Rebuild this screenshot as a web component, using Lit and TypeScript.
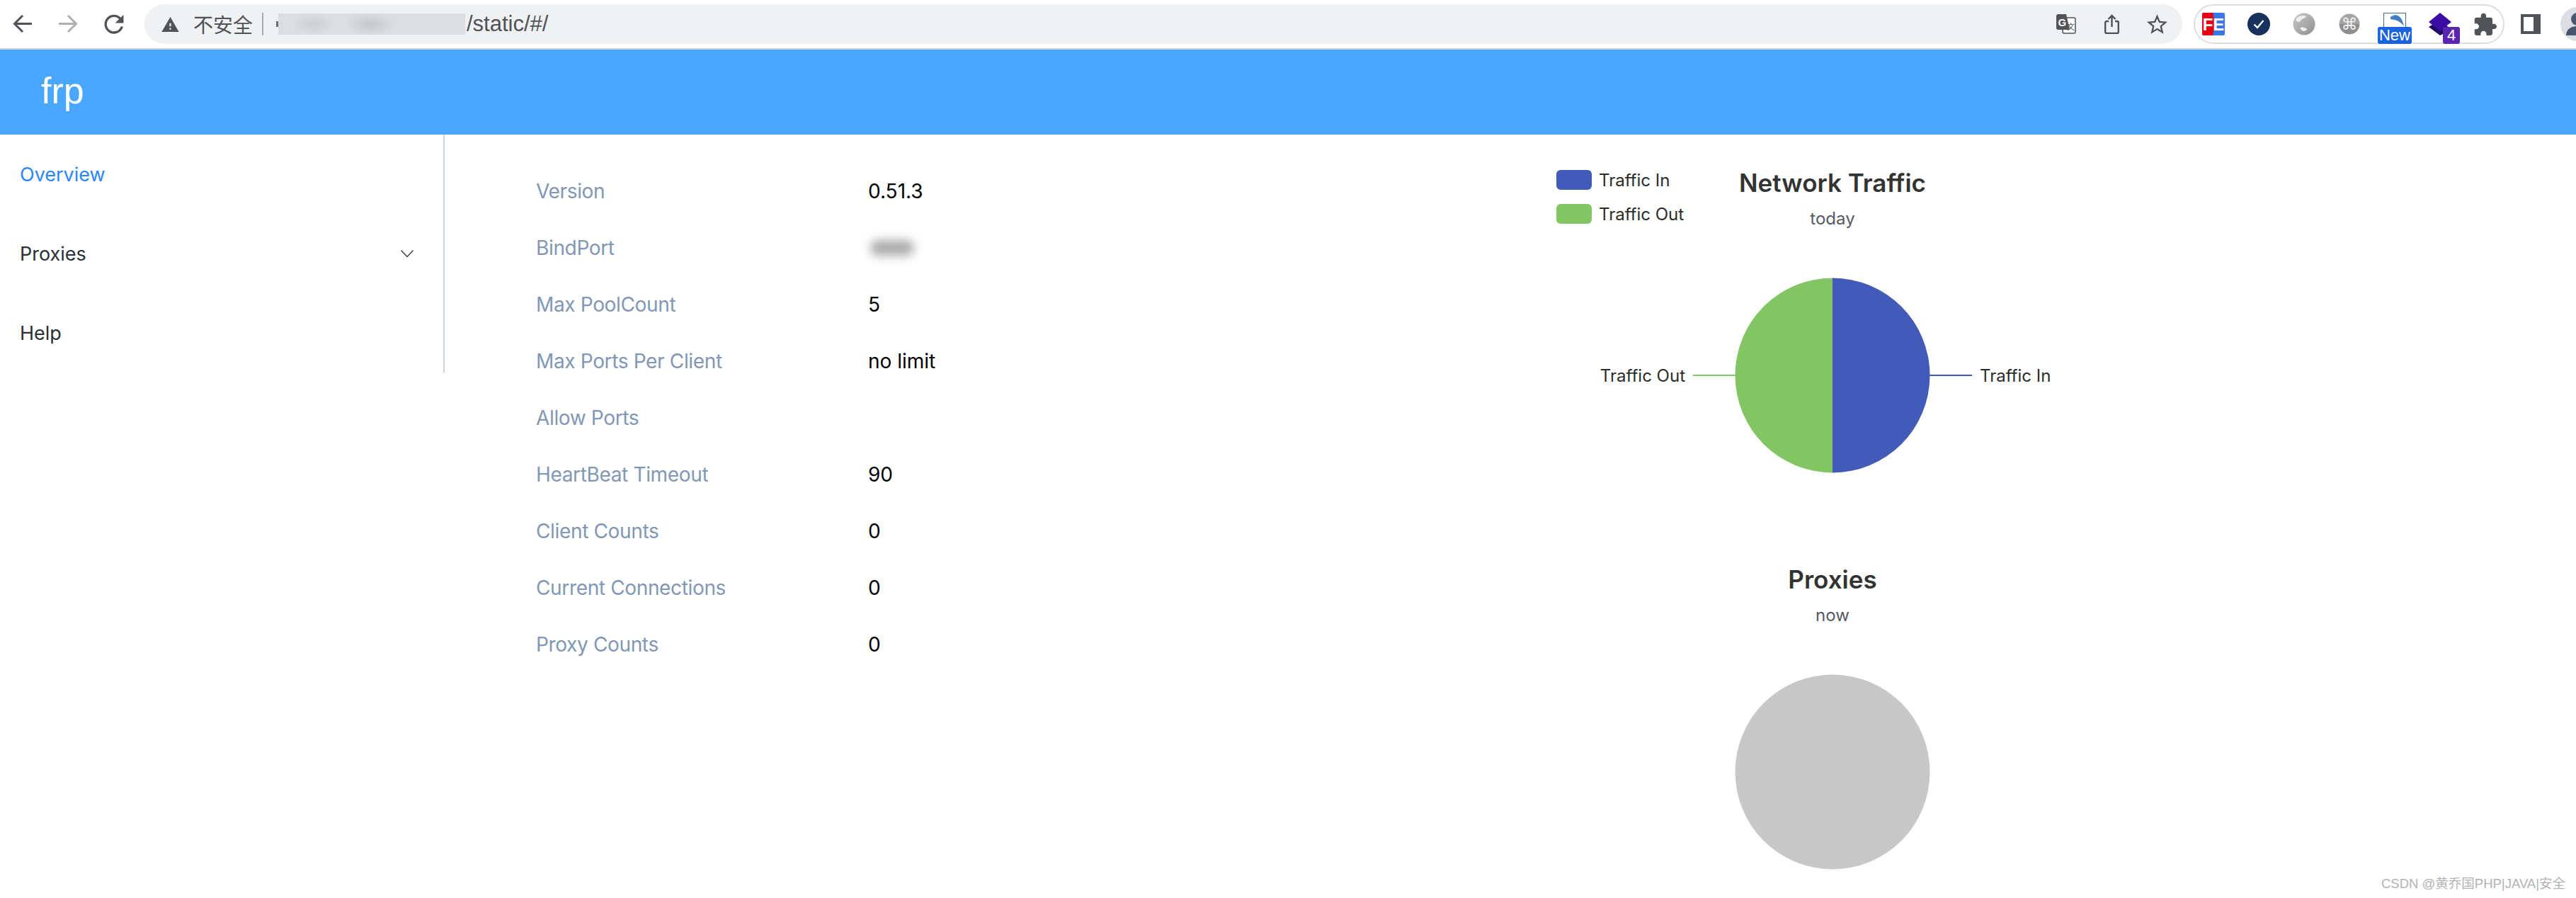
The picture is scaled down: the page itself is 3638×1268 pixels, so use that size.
import { LitElement, html, css } from "lit";
import { customElement } from "lit/decorators.js";

const rows: [string, string | null][] = [
  ["Version", "0.51.3"],
  ["BindPort", null],
  ["Max PoolCount", "5"],
  ["Max Ports Per Client", "no limit"],
  ["Allow Ports", ""],
  ["HeartBeat Timeout", "90"],
  ["Client Counts", "0"],
  ["Current Connections", "0"],
  ["Proxy Counts", "0"],
];

const reload = html`<svg class="ic" viewBox="4 3.6 16 16.6"><path fill="#505358" d="M17.65 6.35A7.958 7.958 0 0 0 12 4c-4.42 0-7.99 3.58-7.99 8s3.57 8 7.99 8c3.73 0 6.84-2.55 7.73-6h-2.08A5.99 5.99 0 0 1 12 18c-3.31 0-6-2.69-6-6s2.69-6 6-6c1.66 0 3.14.69 4.22 1.78L13 11h7V4l-2.35 2.35z"/></svg>`;

@customElement("app-root")
export class AppRoot extends LitElement {
  static styles = css`
    :host { display: block; width: 3638px; height: 1268px; overflow: hidden; position: relative; background: #fff; font-family: Inter, "Noto Sans CJK SC", sans-serif; }
    .toolbar { display: flex; align-items: center; height: 68px; padding-left: 18px; box-sizing: border-box; overflow: hidden; }
    .ic { width: 28px; height: 28px; flex: none; display: block; }
    .fwd { margin-left: 36px; }
    .rel { margin-left: 37px; }
    .url { margin-left: 29px; width: 2878px; height: 56px; border-radius: 28px; background: #eff1f3; display: flex; align-items: center; padding: 0 21px 0 24px; box-sizing: border-box; flex: none; color: #4f5257; }
    .warn { width: 25px; height: 21px; flex: none; }
    .insecure { margin-left: 20px; font-size: 28px; width: 82px; white-space: nowrap; font-family: "Noto Sans CJK SC", sans-serif; line-height: 1; }
    .sep { width: 2px; height: 32px; margin-left: 15px; background: #a9abae; }
    .speck { width: 3px; height: 8px; margin-left: 18px; background: #6b6e72; }
    .masked { width: 264px; height: 30px; background: radial-gradient(ellipse 30px 14px at 50px 15px, #cdd0d2, transparent), radial-gradient(ellipse 34px 16px at 130px 15px, #c6c9cb, transparent), #dbdde0; filter: blur(.6px); }
    .path { margin-left: 2px; font-size: 31px; font-family: "Liberation Sans", sans-serif; }
    .tools { margin-left: auto; display: flex; align-items: center; }
    .share { width: 21px; height: 28px; margin-left: 40px; }
    .star { width: 29px; height: 28px; margin-left: 39px; }
    .pill { position: relative; margin-left: 16px; width: 439px; height: 56px; box-sizing: border-box; border: 2px solid #dedede; border-radius: 28px; padding-left: 10px; display: flex; align-items: center; gap: 32px; flex: none; }
    .ext { position: relative; width: 32px; height: 32px; flex: none; }
    .ext svg { display: block; width: 32px; height: 32px; }
    .badge { position: absolute; top: 20px; height: 24px; border-radius: 3px; color: #fff; font-size: 22px; line-height: 24px; text-align: center; font-family: "Liberation Sans", sans-serif; }
    .new { left: -8px; width: 48px; background: #1a63e0; }
    .four { left: 20px; width: 24px; background: #5a24b0; }
    .panel { margin-left: 23px; }
    .avatar { margin-left: 28px; width: 48px; height: 48px; flex: none; }
    .divider { height: 2px; background: #d4d4d4; }
    .header { height: 120px; box-sizing: border-box; padding: 0 0 5px 58px; background: #4aa7ff; color: #fff; display: flex; align-items: center; font-size: 52px; font-family: "Liberation Sans", sans-serif; }
    .body { display: flex; align-items: flex-start; }
    .menu { width: 628px; height: 336px; box-sizing: border-box; border-right: 2px solid #cfd5e0; flex: none; }
    .item { height: 112px; display: flex; align-items: center; justify-content: space-between; padding: 0 41px 0 28px; font-size: 27px; color: #2b2f36; }
    .active { color: #2a86ff; }
    .chev { width: 20px; height: 12px; }
    .info { width: 1560px; box-sizing: border-box; flex: none; padding: 40px 0 0 129px; }
    .row { height: 80px; display: flex; align-items: center; font-size: 28px; }
    .key { width: 469px; color: #8197b6; flex: none; letter-spacing: -.35px; }
    .val { color: #000; }
    .blurred { display: block; width: 62px; height: 22px; margin-left: 3px; background: #ababab; border-radius: 11px; filter: blur(7px); }
    .charts { width: 800px; padding-top: 30px; display: flex; flex-direction: column; gap: 80px; flex: none; }
    .chart { display: block; width: 800px; height: 480px; font-family: Inter, sans-serif; }
    .t { font-size: 35px; font-weight: 600; fill: #333; text-anchor: middle; }
    .s { font-size: 24px; fill: #555a66; text-anchor: middle; }
    .l { font-size: 24px; fill: #2b2b2b; }
    .mark { position: absolute; right: 15px; top: 1235px; font-size: 18.5px; line-height: 26px; color: #b3b3b3; white-space: nowrap; font-family: "Liberation Sans", "Noto Sans CJK SC", sans-serif; }
  `;

  private chromeBar() {
    return html`<div class="toolbar">
      <svg class="ic" viewBox="0 0 28 28" fill="none" stroke="#505358" stroke-width="3"><path d="M27 13.5H3M14 2 2.500 13.500 14 25"/></svg>
      <svg class="ic fwd" viewBox="0 0 28 28" fill="none" stroke="#aeb0b2" stroke-width="3"><path d="M1 13.5H25M14 2 25.500 13.500 14 25"/></svg>
      <div class="rel">${reload}</div>
      <div class="url">
        <svg class="warn" viewBox="1 2 22 19"><path fill="#505358" fill-rule="evenodd" d="M1 21h22L12 2 1 21zm12-3h-2v-2h2v2zm0-4h-2v-4h2v4z"/></svg>
        <span class="insecure">不安全</span>
        <span class="sep"></span><span class="speck"></span><span class="masked"></span>
        <span class="path">/static/#/</span>
        <div class="tools">
          <svg class="ic" viewBox="0 0 28 28">
            <rect x="9" y="5" width="18" height="22" rx="2" fill="#fff" stroke="#505358" stroke-width="1.500"/>
            <path fill="#505358" d="M3 0h11l5 22H3a3 3 0 0 1-3-3V3a3 3 0 0 1 3-3z"/>
            <text x="2.500" y="17" font-size="15" font-weight="700" fill="#fff" font-family="Liberation Sans">G</text>
            <text x="15" y="22" font-size="11" fill="#505358" font-family="Noto Sans CJK SC">文</text>
          </svg>
          <svg class="share" viewBox="0 0 21 28" fill="none" stroke="#505358" stroke-width="2.400"><path d="M6 10H3.200a2 2 0 0 0-2 2v13a2 2 0 0 0 2 2h14.600a2 2 0 0 0 2-2V12a2 2 0 0 0-2-2H15M10.500 18V2M5.500 7l5-5 5 5"/></svg>
          <svg class="star" viewBox="2 2 20 19"><path fill="#505358" d="M22 9.240l-7.190-.62L12 2 9.190 8.630 2 9.240l5.460 4.730L5.820 21 12 17.270 18.180 21l-1.630-7.030L22 9.240zM12 15.400l-3.760 2.270 1-4.280-3.320-2.880 4.380-.38L12 6.100l1.710 4.040 4.380.38-3.320 2.880 1 4.280L12 15.400z"/></svg>
        </div>
      </div>
      <div class="pill">
        <div class="ext"><svg viewBox="0 0 32 32">
          <rect width="32" height="32" rx="2" fill="#3b78e7"/><path d="M2 0h13q4 16 0 32H2a2 2 0 0 1-2-2V2a2 2 0 0 1 2-2z" fill="#e60012"/>
          <text x="16" y="25" text-anchor="middle" font-size="24" font-weight="700" fill="#fff" font-family="Liberation Sans">FE</text></svg></div>
        <div class="ext"><svg viewBox="0 0 32 32"><circle cx="16" cy="16" r="16" fill="#17325c"/><path d="M9.500 16.500l4.500 4.500 8.500-10" fill="none" stroke="#fff" stroke-width="2.400"/></svg></div>
        <div class="ext"><svg viewBox="0 0 32 32"><defs><linearGradient id="gl" x1="0" y1="0" x2="1" y2="1"><stop offset="0" stop-color="#c9c9c9"/><stop offset="1" stop-color="#8f8f8f"/></linearGradient></defs>
          <circle cx="16" cy="16" r="15.500" fill="url(#gl)"/><path d="M5 8c4-4 10-5 14-3-1 3-5 3-7 5s-3 4-5 3-3-3-2-5zM11 21c3-1 7 0 9 2-1 3-5 4-7 2s-3-3-2-4z" fill="#efefef"/></svg></div>
        <div class="ext"><svg viewBox="0 0 32 32"><circle cx="16" cy="16" r="14.500" fill="#a3a3a3"/><path d="M2 16a14 14 0 0 0 28 0z" fill="#8e8e8e"/><text x="16" y="24" text-anchor="middle" font-size="23" fill="#f0f0f0" font-family="DejaVu Sans">⌘</text></svg></div>
        <div class="ext"><svg viewBox="0 0 32 32"><rect x=".5" y=".5" width="31" height="31" fill="#fff" stroke="#3a6ea5"/><path d="M10 5c8-4 16-2 19 14-5-7-11-9-19-10z" fill="#3f7fc4"/><path d="M4 4h12q-9 1-8 6 10 1 16 8H4z" fill="#fff"/></svg><span class="badge new">New</span></div>
        <div class="ext"><svg viewBox="0 0 32 32"><path d="M16 10 32 24 16 32 0 20z" fill="#1f0a5f"/><path d="M16 0 32 13 16 26 0 13z" fill="#3a0ca3"/></svg><span class="badge four">4</span></div>
        <div class="ext"><svg viewBox="1.500 .5 21.500 21.500"><path fill="#505358" d="M20.500 11H19V7c0-1.100-.9-2-2-2h-4V3.500C13 2.120 11.880 1 10.500 1S8 2.120 8 3.500V5H4c-1.100 0-1.990.9-1.990 2v3.800H3.500c1.490 0 2.700 1.210 2.700 2.700s-1.210 2.700-2.700 2.700H2V20c0 1.100.9 2 2 2h3.800v-1.500c0-1.490 1.210-2.700 2.700-2.700 1.490 0 2.700 1.210 2.700 2.700V22H17c1.100 0 2-.9 2-2v-4h1.500c1.380 0 2.500-1.120 2.500-2.500S21.880 11 20.500 11z"/></svg></div>
      </div>
      <svg class="ic panel" viewBox="0 0 28 28"><rect width="28" height="28" fill="#505358"/><rect x="4" y="4" width="14" height="20" fill="#fff"/></svg>
      <svg class="avatar" viewBox="0 0 48 48"><circle cx="24" cy="24" r="24" fill="#dbdee4"/><circle cx="24" cy="17" r="9" fill="#4a5670"/><path d="M8 40c0-9 8-13 16-13s16 4 16 13z" fill="#4a5670"/></svg>
    </div><div class="divider"></div>`;
  }

  private sidebar() {
    return html`<nav class="menu">
      <div class="item active">Overview</div>
      <div class="item">Proxies
        <svg class="chev" viewBox="0 0 20 12" fill="none" stroke="#3a3f47" stroke-width="1.500"><path d="M1.500 1.500 10 10.500 18.500 1.500"/></svg>
      </div>
      <div class="item">Help</div>
    </nav>`;
  }

  private info() {
    return html`<section class="info">
      ${rows.map(([k, v]) => html`<div class="row"><span class="key">${k}</span>${v === null ? html`<span class="blurred"></span>` : html`<span class="val">${v}</span>`}</div>`)}
    </section>`;
  }

  private charts() {
    return html`<section class="charts">
      <svg class="chart" viewBox="0 0 800 480">
        <rect x="10" y="20" width="50" height="28" rx="6" fill="#425bb9"/>
        <text class="l" x="70" y="43">Traffic In</text>
        <rect x="10" y="68" width="50" height="28" rx="6" fill="#83c564"/>
        <text class="l" x="70" y="91">Traffic Out</text>
        <text class="t" x="400" y="51">Network Traffic</text>
        <text class="s" x="400" y="97">today</text>
        <path d="M400 172.500a137.500 137.500 0 0 1 0 275z" fill="#425bb9"/>
        <path d="M400 172.500a137.500 137.500 0 0 0 0 275z" fill="#83c564"/>
        <path d="M537 310h60" stroke="#425bb9" stroke-width="2"/>
        <path d="M203 310h60" stroke="#83c564" stroke-width="2"/>
        <text class="l" x="608" y="319">Traffic In</text>
        <text class="l" x="192" y="319" text-anchor="end">Traffic Out</text>
      </svg>
      <svg class="chart" viewBox="0 0 800 480">
        <text class="t" x="400" y="51">Proxies</text>
        <text class="s" x="400" y="97">now</text>
        <circle cx="400" cy="310" r="137.500" fill="#c8c8c8"/>
      </svg>
    </section>`;
  }

  render() {
    return html`${this.chromeBar()}
      <header class="header">frp</header>
      <div class="body">${this.sidebar()}${this.info()}${this.charts()}</div>
      <div class="mark">CSDN @黄乔国PHP|JAVA|安全</div>`;
  }
}
